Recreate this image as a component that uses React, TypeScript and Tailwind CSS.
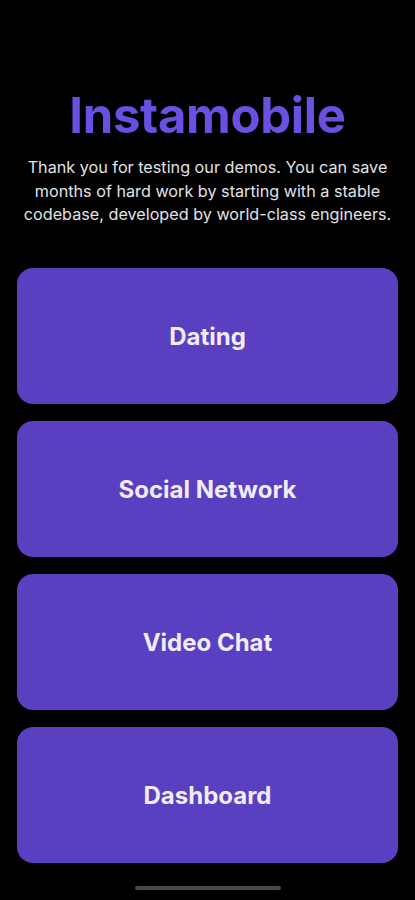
import React from 'react';

const demos = ['Dating', 'Social Network', 'Video Chat', 'Dashboard'];

const App: React.FC = () => {
  return (
    <div
      className="relative w-[415px] h-[900px] bg-black overflow-hidden"
      style={{ fontFamily: 'Inter, "Liberation Sans", sans-serif' }}
    >
      <div className="flex flex-col items-center pt-[87px]">
        <h1 className="text-[49px] leading-[58px] font-bold text-[#6a4fe0] tracking-[-0.3px]">Instamobile</h1>
        <p className="mt-[11px] px-[20px] text-center text-[16.2px] leading-[23.5px] text-[#e2e2e6]">
          Thank you for testing our demos. You can save months of hard work by starting with a stable codebase,
          developed by world-class engineers.
        </p>
      </div>

      {/* Demo buttons */}
      <div className="flex flex-col gap-[17px] px-[17px] mt-[41px]">
        {demos.map((name) => (
          <button
            key={name}
            className="h-[136px] w-full rounded-[16px] bg-[#5a3fc0] flex items-center justify-center"
          >
            <span className="text-[24px] leading-[30px] font-bold text-[#f0ecfa] mt-[2px]">{name}</span>
          </button>
        ))}
      </div>

      <div className="absolute bottom-[10px] left-1/2 -translate-x-1/2 w-[146px] h-[4px] rounded-full bg-[#4a4a4c]" />
    </div>
  );
};

export default App;
